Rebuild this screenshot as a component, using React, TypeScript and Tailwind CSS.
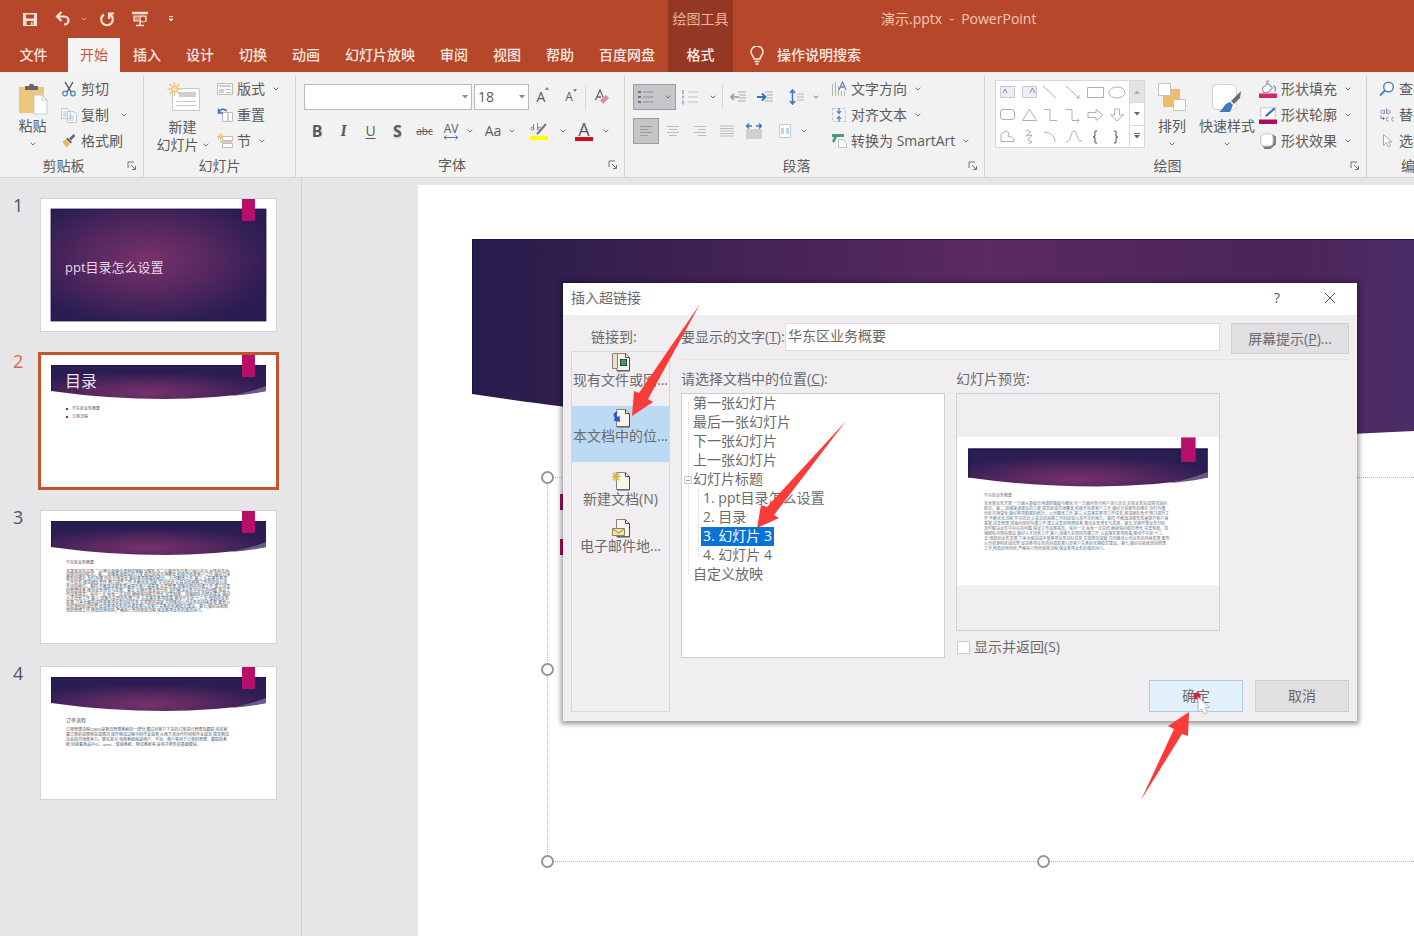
import { useState } from "react";
import type { ReactNode } from "react";
import clsx from "clsx";

const tabs = ["开始", "插入", "设计", "切换", "动画", "幻灯片放映", "审阅", "视图", "帮助", "百度网盘"];

const overview =
  "本季度业务开展,一方面从基础市场调研做起与细化,另一方面对重点客户进行走访,总体业务完成情况良好稳定。第二,加强渠道建设的力度,提高区域市场覆盖,积极开拓新客户工作,做好日常服务的维护,及时沟通,分析市场变化,做好各项数据的统计。公司整体工作,第三,认真落实各项工作任务,推进团队合作,努力提升工作,不断优化流程,学习培训,认真总结前期工作的经验以及不足的地方。第四,不断改进服务质量提升客户满意度,完善管理,加强内部的沟通工作,建立完善的管理体系,推动业务增长与发展。第五,定期开展业务分析,及时解决业务中存在的问题,保证工作效率提高。每月一次,每季一次总结,继续保持稳定增长,完善制度。加强团队内部的建设,做好人才培养工作,第六,加强与总部的沟通工作,认真落实各项政策,推动华东区“十三五”规划的业务发展,力争全面完成年度各项业务目标任务,实现新的突破,共同推动公司业务的持续发展,整合公司资源和区域优势,促进各项业务的协调发展以及客户关系的长期稳定建设。第七,做好应收账款的管理工作,降低经营风险,严格执行合同审批流程,保证各项业务的规范运行。".replaceAll(",", ",");

const orderFlow =
  "订单管理流程(OMS)是物流管理系统的一部分,通过对客户下达的订单进行管理及跟踪,动态掌握订单的进展和完成情况,提升物流过程中的作业效率,从而节省运作时间和作业成本,提高物流企业的市场竞争力。顾名思义,电商系统就是用户、平台、商户等对于订单的管理、跟踪的系统,衔接着商品中心、wms、促销系统、物流系统等,是电子商务的基础模块。".replaceAll(",", ",");

const treeItems = [
  { id: "first", label: "第一张幻灯片" },
  { id: "last", label: "最后一张幻灯片" },
  { id: "next", label: "下一张幻灯片" },
  { id: "prev", label: "上一张幻灯片" },
  { id: "titles", label: "幻灯片标题", expandable: true },
  { id: "s1", label: "1. ppt目录怎么设置", child: true },
  { id: "s2", label: "2. 目录", child: true },
  { id: "s3", label: "3. 幻灯片 3", child: true },
  { id: "s4", label: "4. 幻灯片 4", child: true },
  { id: "custom", label: "自定义放映" },
];

function Icon({ children, className = "size-4", box = "0 0 16 16" }: { children: ReactNode; className?: string; box?: string }) {
  return (
    <svg viewBox={box} className={clsx("shrink-0", className)} fill="none" stroke="currentColor" aria-hidden="true">
      {children}
    </svg>
  );
}

function Caret({ className = "text-gray-500" }: { className?: string }) {
  return (
    <Icon box="0 0 6 4" className={clsx("h-1 w-1.5", className)}>
      <path d="M.7.7 3 3 5.3.7" />
    </Icon>
  );
}

function Separator() {
  return <span className="h-6 w-px shrink-0 bg-[#d6d6d6]" />;
}

function Group({ label, launcher, className, children }: { label: string; launcher?: boolean; className: string; children: ReactNode }) {
  return (
    <section className={clsx("flex shrink-0 flex-col", className)}>
      <div className="flex h-[78px]">{children}</div>
      <div className="flex h-6 items-center">
        <span className="flex-1 text-center">{label}</span>
        {launcher && (
          <button aria-label={label + "设置"} className="w-4">
            <Icon className="size-2.5 text-gray-500" box="0 0 10 10">
              <path d="M1 7V1h6M4 4l4 4M8.500 5v3.500H5" />
            </Icon>
          </button>
        )}
      </div>
    </section>
  );
}

function RowButton({ icon, label, caret }: { icon: ReactNode; label: string; caret?: boolean }) {
  return (
    <button className="flex h-[26px] items-center gap-1 whitespace-nowrap">
      {icon}
      {label}
      {caret && <Caret className="ml-1 text-gray-500" />}
    </button>
  );
}

function Banner({ full }: { full?: boolean }) {
  const id = full ? "bannerFull" : "bannerCurve";
  return (
    <svg viewBox="0 0 235 132" className="absolute inset-0 size-full" aria-hidden="true">
      <defs>
        <radialGradient id={id} cx="0.45" cy={full ? "0.45" : "0.8"} r="0.6">
          <stop offset="0" stopColor="#78316b" />
          <stop offset="0.45" stopColor="#582860" />
          <stop offset="1" stopColor="#2a1d52" />
        </radialGradient>
      </defs>
      {full ? (
        <rect x="10" y="10" width="215" height="112" fill={`url(#${id})`} stroke="#20154f" strokeWidth="0.8" />
      ) : (
        <>
          <path d="M10 10H225V36Q176 44 125 44 66 44 10 36Z" fill={`url(#${id})`} />
          <path d="M10.500 36V10.500H225" fill="none" stroke="#20154f" />
          <path d="M190 41Q210 37 225 31V36Q208 40 190 41Z" fill="#6a5a88" />
        </>
      )}
      <rect x="201" y="0" width="13" height="22" fill="#b80f6b" />
    </svg>
  );
}

function Thumb({ n, selected, children }: { n: number; selected?: boolean; children: ReactNode }) {
  return (
    <li className="flex">
      <span className={clsx("w-7 text-lg leading-3", selected ? "text-[#d9694b]" : "text-gray-600")}>{n}</span>
      <button
        aria-label={`幻灯片 ${n}`}
        className={clsx(
          "relative h-[132px] w-[235px] overflow-hidden bg-white text-left",
          selected ? "ring-3 ring-[#c4552a]" : "ring-1 ring-[#d4d4d6]"
        )}
      >
        {children}
      </button>
    </li>
  );
}

function Ribbon() {
  return (
    <div className="flex h-[106px] shrink-0 divide-x divide-[#d2d2d2] overflow-hidden border-b border-[#d5d5d7] bg-[#f3f2f2] pt-1 text-sm leading-4 text-[#5a5a5a]">
      <Group label="剪贴板" launcher className="w-[144px]">
        <button className="flex w-[61px] flex-col items-center pt-[7px] pl-1">
          <Icon className="h-8 w-[30px]" box="0 0 30 32">
            <path d="M1 4h25v26H1z" fill="#eac67e" stroke="none" />
            <path d="M7 3h4c0-3 5-3 5 0h4v4H7z" fill="#66666b" stroke="none" />
            <path d="M16 12h8l5 5v14H16z" fill="#fff" stroke="#c9c9cc" />
            <path d="M24 12v5h5" stroke="#c9c9cc" />
          </Icon>
          <span className="mt-[3px]">粘贴</span>
          <Caret className="mt-2 text-gray-500" />
        </button>
        <div>
          <RowButton
            label="剪切"
            icon={
              <Icon>
                <path d="M4 1l6 10M12 1 6 11" stroke="#555" strokeWidth="1.400" />
                <circle cx="4" cy="12.500" r="2.300" stroke="#4f86c6" strokeWidth="1.300" />
                <circle cx="12" cy="12.500" r="2.300" stroke="#4f86c6" strokeWidth="1.300" />
              </Icon>
            }
          />
          <div className="flex items-center gap-3">
            <RowButton
              label="复制"
              icon={
                <Icon>
                  <path d="M.5 1.500h6l3 3v7h-9zM6.500 4.500h6l3 3v8h-9z" fill="#fafbfd" stroke="#b9c9de" />
                  <path d="M2 5h4M2 7h4M2 9h4M8 9h5M8 11h5M8 13h5" stroke="#a9c4e6" />
                </Icon>
              }
            />
            <button aria-label="复制选项"><Caret /></button>
          </div>
          <RowButton
            label="格式刷"
            icon={
              <Icon>
                <path d="M13.500 2 9 6.500" stroke="#666" strokeWidth="2.500" />
                <path d="M6.500 4.500 11 9l-1.500 1.500L5 6z" fill="#666" stroke="none" />
                <path d="M4.500 6.500 9 11l-3.500 3.500L1.500 9z" fill="#ebb55c" stroke="none" />
              </Icon>
            }
          />
        </div>
      </Group>

      <Group label="幻灯片" className="w-[152px]">
        <button className="flex w-[73px] flex-col items-center pt-[5px] pl-1">
          <Icon className="h-8 w-9" box="0 0 36 32">
            <path d="M7.500 7.500h27v22h-27z" fill="#fff" stroke="#c8c8ca" />
            <path d="M14 11h17v5H14z" fill="#cfcfd1" stroke="none" />
            <path d="M11 20.500h20M11 24.500h20" stroke="#c8c8ca" />
            <path d="M9.500 1v14M2.500 8h14M4.500 3l10 10M14.500 3l-10 10" stroke="#f0c987" strokeWidth="1.500" />
            <circle cx="9.500" cy="8" r="3" fill="#f8e3b8" stroke="#eec070" />
          </Icon>
          <span className="mt-1.5">新建</span>
          <span className="mt-0.5 flex items-center gap-1">幻灯片<Caret /></span>
        </button>
        <div>
          <RowButton
            label="版式"
            caret
            icon={
              <Icon>
                <path d="M.5 2.500h15v11H.5z" fill="#f7f7f7" stroke="#bdbdbf" />
                <path d="M2 4h12v2H2zM2 8h5v4H2z" fill="#cfcfd2" stroke="none" />
                <path d="M9 8.500h5M9 11.500h5" stroke="#bdbdbf" />
              </Icon>
            }
          />
          <RowButton
            label="重置"
            icon={
              <Icon>
                <path d="M5.500 5.500h10v9h-10z" fill="#fff" stroke="#bdbdbf" />
                <path d="M11 6v8" stroke="#d0d0d4" strokeWidth="2" />
                <path d="M2 5.500C3 2 7 1 10 4M1.500 1.500v4.500H6" stroke="#3f73b5" strokeWidth="1.500" />
              </Icon>
            }
          />
          <RowButton
            label="节"
            caret
            icon={
              <Icon>
                <path d="M5.500 3.500h10v4h-10zM5.500 10.500h10v4h-10z" fill="#fff" stroke="#c2bcbc" />
                <path d="M3 9h12" stroke="#d99a84" />
                <path d="M3.500 0v7M0 3.500h7M1 1l5 5M6 1 1 6" stroke="#efc27a" />
              </Icon>
            }
          />
        </div>
      </Group>

      <Group label="字体" launcher className="w-[329px]">
        <div className="mt-2 flex-1 pl-2">
          <div className="flex h-[26px] items-center">
            <label className="relative mr-0.5 flex w-[168px] items-center">
              <select aria-label="字体" className="h-[26px] w-full appearance-none border border-[#b9b9bb] bg-white px-1">
                <option></option>
              </select>
              <Icon box="0 0 6 4" className="absolute right-1 h-1 w-1.5"><path d="M0 0h6L3 3.500z" fill="#888" stroke="none" /></Icon>
            </label>
            <label className="relative flex w-[55px] items-center">
              <select aria-label="字号" defaultValue="18" className="h-[26px] w-full appearance-none border border-[#b9b9bb] bg-white px-[3px]">
                <option>18</option>
                <option>24</option>
              </select>
              <Icon box="0 0 6 4" className="absolute right-1 h-1 w-1.5"><path d="M0 0h6L3 3.500z" fill="#888" stroke="none" /></Icon>
            </label>
            <button aria-label="增大字号" className="flex w-7 justify-center text-sm">
              A
              <Icon box="0 0 4 4" className="size-1"><path d="M0 3h4L2 0z" fill="#6b87b5" stroke="none" /></Icon>
            </button>
            <button aria-label="减小字号" className="flex w-7 justify-center text-xs">
              A
              <Icon box="0 0 4 4" className="size-1"><path d="M0 0h4L2 3z" fill="#6b87b5" stroke="none" /></Icon>
            </button>
            <Separator />
            <button aria-label="清除格式" className="ml-2">
              <Icon>
                <path d="M1.500 11 6 1l3 7M3 8h4" stroke="#666" strokeWidth="1.300" />
                <path d="m6 11 6-5 3 3-6 6z" fill="#e58a9c" stroke="none" />
              </Icon>
            </button>
          </div>
          <div className="mt-2 flex h-[26px] items-center">
            <button className="w-[26px] text-base font-bold">B</button>
            <button className="w-[27px] font-serif text-base font-bold italic">I</button>
            <button className="w-[27px] underline underline-offset-2">U</button>
            <button className="w-[27px] text-base font-bold text-shadow-sm">S</button>
            <button className="w-[27px] text-[10px] line-through">abc</button>
            <button className="flex w-[40px] items-center justify-center gap-2">
              <span className="flex flex-col items-center">
                <span className="text-xs leading-3">AV</span>
                <Icon box="0 0 16 5" className="h-[5px] w-4 text-[#3f7cc4]"><path d="M1 2.500h14M3.500.5l-2.500 2 2.500 2M12.500.5l2.500 2-2.500 2" /></Icon>
              </span>
              <Caret />
            </button>
            <button className="flex w-[44px] items-center justify-center gap-2">Aa<Caret /></button>
            <span className="ml-1"><Separator /></span>
            <button aria-label="突出显示颜色" className="flex w-[44px] items-center justify-center gap-3">
              <Icon className="h-5 w-[18px]" box="0 0 18 20">
                <path d="M0 15h18v4H0z" fill="#ffff00" stroke="none" />
                <path d="M3.500 3v6M1 7.500a1.500 1.500 0 1 0 3 0 1.500 1.500 0 1 0-3 0M7.500 2v7M8 7.500a1.500 1.500 0 1 0 3 0 1.500 1.500 0 1 0-3 0" stroke="#888" />
                <path d="m16 3-7 8-2 2" stroke="#777" strokeWidth="2" />
              </Icon>
              <Caret />
            </button>
            <button aria-label="字体颜色" className="flex w-[44px] items-center justify-center gap-2.5">
              <span className="w-[18px] border-b-4 border-[#cc0f1a] text-lg leading-4">A</span>
              <Caret />
            </button>
          </div>
        </div>
      </Group>

      <Group label="段落" launcher className="w-[360px]">
        <div className="mt-2 w-[206px] pl-2">
          <div className="flex h-[26px] items-center">
            <button aria-label="项目符号" className="flex h-[26px] w-[43px] items-center justify-between border border-[#9d9d9f] bg-[#c6c6c8] px-1">
              <Icon><path d="M5 3h10M5 8h10M5 13h10" stroke="#8e9094" /><path d="M0 3h3M0 8h3M0 13h3" stroke="#4f78a8" strokeWidth="2" /></Icon>
              <Caret />
            </button>
            <button aria-label="编号" className="flex w-[46px] items-center gap-3 pl-1.5">
              <Icon><path d="M6 3h10M6 8h10M6 13h10" stroke="#c3c3c6" /><path d="M1 1v4M1 6.500v3M1 11.500v4" stroke="#9a9adb" strokeWidth="1.500" /></Icon>
              <Caret />
            </button>
            <Separator />
            <button aria-label="减少缩进" className="flex w-[30px] justify-center">
              <Icon><path d="M8 3h8M9 6h7M9 9h7M8 12h8" stroke="#cfcfd1" strokeWidth="2" /><path d="M9 8H1M4 5 1 8l3 3" stroke="#98989b" strokeWidth="1.600" /></Icon>
            </button>
            <button aria-label="增加缩进" className="flex w-6 justify-center">
              <Icon><path d="M8 3h8M10 6h6M10 9h6M8 12h8" stroke="#cfcfd1" strokeWidth="2" /><path d="M0 8h8M5 4.500 8.500 8 5 11.500" stroke="#2e75c5" strokeWidth="2" /></Icon>
            </button>
            <span className="ml-1"><Separator /></span>
            <button aria-label="行距" className="flex items-center gap-2 pl-2">
              <Icon><path d="M3.500 2v12M1 4l2.500-3L6 4M1 12l2.500 3L6 12" stroke="#3f7cc4" strokeWidth="1.600" /><path d="M8 5h7M8 8h7M8 11h7" stroke="#b5b5b8" /></Icon>
              <Caret />
            </button>
          </div>
          <div className="mt-2 flex h-[26px] items-center">
            <button aria-label="左对齐" className="flex size-[26px] items-center justify-center border border-[#9d9d9f] bg-[#c6c6c8]">
              <Icon><path d="M2 3.500h12M2 6.500h8M2 9.500h12M2 12.500h8" stroke="#9b9b9e" /></Icon>
            </button>
            <button aria-label="居中" className="flex w-[27px] justify-center">
              <Icon><path d="M2 3.500h12M4 6.500h8M2 9.500h12M4 12.500h8" stroke="#bcbcbf" /></Icon>
            </button>
            <button aria-label="右对齐" className="flex w-[27px] justify-center">
              <Icon><path d="M2 3.500h12M6 6.500h8M2 9.500h12M6 12.500h8" stroke="#bcbcbf" /></Icon>
            </button>
            <button aria-label="两端对齐" className="flex w-[27px] justify-center">
              <Icon><path d="M1 3h14M1 5.500h14M1 8h14M1 10.500h14M1 13h14" stroke="#bcbcbf" /></Icon>
            </button>
            <button aria-label="分散对齐" className="flex w-[27px] justify-center">
              <Icon><path d="M0 6h16v10H0z" fill="#cfd0d4" stroke="none" /><path d="M1 3h5M10 3h5M3 .5.500 3 3 5.500M13 .5 15.500 3 13 5.500" stroke="#3f73b5" strokeWidth="1.300" /></Icon>
            </button>
            <span className="ml-1"><Separator /></span>
            <button aria-label="分栏" className="flex items-center gap-2 pl-1.5">
              <Icon><path d="M2.500 1.500h11v13h-11z" fill="#fff" stroke="#b8cbe2" /><path d="M4 6h3M9 6h3M4 8h3M9 8h3M4 10h3M9 10h3" stroke="#7fa5d4" /></Icon>
              <Caret />
            </button>
          </div>
        </div>
        <div>
          <RowButton
            label="文字方向"
            caret
            icon={<Icon><path d="M1.500 3v12M4.500 1v14M7.500 5v10M10.500 10v5M13.500 10v5" stroke="#b2b2b6" /><path d="m8 9 3.500-8L15 9M9 6h5" stroke="#6a85c0" strokeWidth="1.300" /></Icon>}
          />
          <RowButton
            label="对齐文本"
            caret
            icon={<Icon><path d="M1.500 1.500h13v13h-13z" stroke="#b4c5da" strokeDasharray="3 2" /><path d="M8 1v5M8 10v5M6 4l2 2.500L10 4M6 12l2-2.500 2 2.500" stroke="#4f7fb8" strokeWidth="1.200" /></Icon>}
          />
          <RowButton
            label="转换为 SmartArt"
            caret
            icon={<Icon><path d="M1 1h12v3H6L3 10 1 8l2-4H1z" fill="#4e9a78" stroke="none" /><path d="M7.500 6.500h5l3 4v4h-8z" fill="#fff" stroke="#b8c5bf" /></Icon>}
          />
        </div>
      </Group>

      <Group label="绘图" launcher className="w-[382px]">
        <div className="mt-1 ml-2.5 flex h-[68px] w-[150px] border border-[#d9d9db] bg-white text-[#b0b0b4]">
          <Icon className="h-[66px] w-[133px]" box="0 0 133 66">
            <path d="M4.500 5.500h14v11h-14zM26.500 5.500h14v11h-14z" fill="#eceef4" stroke="#c5c9d6" />
            <path d="m7 12 2-4 2 4M34 12l2.500-5 2.500 5" stroke="#7d86c9" />
            <path d="M47 5l13 12M70 5l13 12m0-3v3h-3" />
            <path d="M91.500 6.500h16v10h-16z" />
            <ellipse cx="121" cy="11.500" rx="8" ry="5.500" />
            <rect x="4.500" y="28.500" width="14" height="10" rx="2.500" />
            <path d="M26.500 39.500 33.500 28l7 11.500zM48 28.500h6v11h7M70 28.500h6v11h7m-2-2 2 2-2 2" />
            <path d="M92 31.500h8v-3l7 5.500-7 5.500v-3h-8zM118.500 28v6h-4l6.500 6 6.500-6h-4v-6z" />
            <path d="M5 60.500V53l5-3 3 2-1 4c2-1 6 0 6 4.500zM30 49l5 2-5 4 6-1-4 5 4 2-4 2M48 51c6 0 11 4 11 10M70 61c6 0 4-11 8-11s2 11 8 10" />
            <path d="M101 50c-3 0-2 2-2 4s-1 2-2 2c1 0 2 0 2 2s-1 4 2 4M118 50c3 0 2 2 2 4s1 2 2 2c-1 0-2 0-2 2s1 4-2 4" stroke="#777" strokeWidth="1.300" />
          </Icon>
          <div className="flex w-[15px] flex-col divide-y divide-[#d9d9db] border-l border-[#d9d9db]">
            <button aria-label="上一行" className="flex flex-1 items-center justify-center bg-[#e3e3e4]"><Icon box="0 0 6 4" className="h-1 w-1.5"><path d="M0 4h6L3 .5z" fill="#aaa" stroke="none" /></Icon></button>
            <button aria-label="下一行" className="flex flex-1 items-center justify-center"><Icon box="0 0 6 4" className="h-1 w-1.5"><path d="M0 0h6L3 3.500z" fill="#666" stroke="none" /></Icon></button>
            <button aria-label="其他形状" className="flex flex-1 items-center justify-center"><Icon box="0 0 6 6" className="size-1.5"><path d="M0 2h6L3 5.500zM0 0h6v1H0z" fill="#666" stroke="none" /></Icon></button>
          </div>
        </div>
        <button className="flex w-[54px] flex-col items-center pt-[7px]">
          <Icon className="h-8 w-7" box="0 0 28 32">
            <path d="M5 6h17v18H5z" fill="#ebbd6c" stroke="none" />
            <path d="M.5.500h12v12H.5zM15.500 16.500h12v11h-12z" fill="#fff" stroke="#c3c3c6" />
          </Icon>
          <span className="mt-[3px]">排列</span>
          <Caret className="mt-2 text-gray-500" />
        </button>
        <button className="flex w-14 flex-col items-center whitespace-nowrap pt-[7px]">
          <Icon className="h-8 w-[30px]" box="0 0 30 32">
            <rect x="0.500" y="1.500" width="24" height="25" rx="4" fill="#fff" stroke="#d0d0d3" />
            <path d="m29 8-1 7-6 6-3-3z" fill="#6d6d72" stroke="none" />
            <path d="m18 19 3 3-3 7H7c4-2 5-9 11-10z" fill="#3f78bd" stroke="none" />
          </Icon>
          <span className="mt-[3px]">快速样式</span>
          <Caret className="mt-2 text-gray-500" />
        </button>
        <div className="ml-1">
          <RowButton
            label="形状填充"
            caret
            icon={<Icon className="size-[18px]"><path d="M0 12h16v4H0z" fill="#d8256a" stroke="none" /><path d="m3 7 5-4 4 4-4 4H4zM7 4V1h2" fill="#fff" stroke="#9a9a9e" /><path d="M13 5c2 1 2 4 1 5" stroke="#4f86c6" /></Icon>}
          />
          <RowButton
            label="形状轮廓"
            caret
            icon={<Icon className="size-[18px]"><path d="M0 12h16v4H0z" fill="#a80f5f" stroke="none" /><path d="M1.500 10V1.500h13V10" fill="#fff" stroke="#c4c8d2" /><path d="M14 2 6 9" stroke="#3f73b5" strokeWidth="2" /></Icon>}
          />
          <RowButton
            label="形状效果"
            caret
            icon={<Icon className="size-[18px]"><path d="M3 12.500 5 15h5l5-4V4l-3-2z" fill="#77777b" stroke="none" /><rect x="1.500" y="1.500" width="11" height="11" rx="3.500" fill="#fff" stroke="#c2c2c5" /></Icon>}
          />
        </div>
      </Group>

      <Group label="编辑" className="w-[96px]">
        <div className="pl-3">
          <RowButton label="查找" icon={<Icon><circle cx="9.500" cy="6" r="4.800" fill="#fff" stroke="#4f86c6" strokeWidth="1.500" /><path d="m6 9.500-5 5" stroke="#4f86c6" strokeWidth="2" /></Icon>} />
          <RowButton
            label="替换"
            icon={
              <Icon>
                <circle cx="3.500" cy="5" r="1.800" stroke="#9b93bd" />
                <circle cx="9.500" cy="5" r="1.800" stroke="#9b93bd" />
                <path d="M5.500 2.500V7M7.500 1v6M9.500 10.500a1.800 1.800 0 1 0 0 3.500M15 10.500a1.800 1.800 0 1 0 0 3.500" stroke="#9b93bd" />
                <path d="M2 8.500v3h3.500M4 10l1.500 1.500L4 13" stroke="#4f86c6" />
              </Icon>
            }
          />
          <RowButton label="选择" icon={<Icon><path d="M4.500 1.500v11l3-3 2 4.500 2-1-2-4h3.500z" fill="#fff" stroke="#aaaaad" /></Icon>} />
        </div>
      </Group>
    </div>
  );
}

function PageIcon({ kind }: { kind: string }) {
  return (
    <Icon className="size-5" box="0 0 20 20">
      <path d="M5.500 1.500h9l4 4v13h-13z" fill="#f7f5ea" stroke="#85857f" />
      <path d="M14.500 1.500v4h4M18.500 6v13H6" stroke="#4a4a46" />
      {kind === "file" && (
        <>
          <path d="M1.500 1.500h5v15h-5z" fill="#e6e2c5" stroke="#85857f" />
          <path d="M9 7h7v7H9z" fill="#26384a" stroke="none" />
          <circle cx="12.500" cy="10.500" r="3" fill="#3f9a62" stroke="none" />
        </>
      )}
      {kind === "place" && <path d="M5 4C2 5 2 8 4 10L2.500 12.500 9 14l-.5-6.500L6.500 9C5 8 5 6 7 4z" fill="#2b55c8" stroke="none" />}
      {kind === "new" && <path d="M5 1v9M1 5.500h9M2 2l6 7M8 2 2 9" stroke="#cdb94c" strokeWidth="1.300" />}
      {kind === "mail" && (
        <>
          <path d="M1.500 10.500h12v7h-12z" fill="#efe6a8" stroke="#8c8458" />
          <path d="m2 11 5.500 4 5.500-4" stroke="#8c8458" />
        </>
      )}
    </Icon>
  );
}

function HyperlinkDialog() {
  const [text, setText] = useState("华东区业务概要");
  const [selected, setSelected] = useState("s3");

  return (
    <div
      role="dialog"
      aria-label="插入超链接"
      className="absolute top-[105px] left-[563px] flex h-[438px] w-[794px] flex-col bg-[#f0eef0] text-sm leading-4 text-[#6a6a6d] shadow-[0_1px_5px_2px_rgba(0,0,0,0.4)]"
    >
      <div className="flex h-8 shrink-0 items-center bg-white pr-[21px] pb-0.5 pl-2">
        <h2 className="flex-1">插入超链接</h2>
        <button aria-label="帮助" className="mr-11 text-[#555]">?</button>
        <button aria-label="关闭" className="text-[#555]">
          <Icon className="size-3" box="0 0 12 12"><path d="m1 1 10 10M11 1 1 11" /></Icon>
        </button>
      </div>
      <div className="flex flex-1 gap-[11px] px-2 pt-2 pb-[9px]">
        <div className="flex w-[99px] flex-col">
          <span className="h-7 pl-5 leading-7">链接到:</span>
          <div className="flex-1 border border-[#d9d7d9]">
            <button className="flex h-[54px] w-full flex-col items-center whitespace-nowrap">
              <PageIcon kind="file" />现有文件或网...
            </button>
            <button className="flex h-14 w-full flex-col items-center whitespace-nowrap bg-[#bddaf4] pt-0.5">
              <PageIcon kind="place" />本文档中的位...
            </button>
            <button className="mt-2 flex h-[47px] w-full flex-col items-center whitespace-nowrap pt-px">
              <PageIcon kind="new" />新建文档(N)
            </button>
            <button className="flex h-[47px] w-full flex-col items-center whitespace-nowrap pt-px">
              <PageIcon kind="mail" />电子邮件地...
            </button>
          </div>
        </div>

        <div className="flex flex-1 flex-col">
          <div className="flex h-[31px]">
            <label htmlFor="display" className="w-[104px] whitespace-nowrap leading-7">
              要显示的文字(<u>T</u>):
            </label>
            <input
              id="display"
              value={text}
              onChange={(e) => setText(e.target.value)}
              className="h-7 min-w-0 flex-1 border border-[#dedcde] bg-white px-0.5 pb-1"
            />
            <button className="ml-[11px] w-[118px] border border-[#cfcdd0] bg-[#e1dfe2]">
              屏幕提示(<u>P</u>)...
            </button>
          </div>
          <div className="mt-[5px] h-px bg-[#e6e4e6]" />
          <div className="mt-[7px] flex gap-[11px]">
            <div className="w-[264px]">
              <p className="h-[26px] leading-6">请选择文档中的位置(<u>C</u>):</p>
              <ul role="tree" className="relative h-[265px] border border-[#cfcdcf] bg-white">
                <li aria-hidden="true" className="absolute top-2 left-1.5 h-[172px] border-l border-dotted border-[#d6d6d8]" />
                <li aria-hidden="true" className="absolute top-[96px] left-4 h-[66px] border-l border-dotted border-[#d6d6d8]" />
                {treeItems.map((item) => (
                  <li key={item.id} role="treeitem" aria-selected={item.id === selected} className={clsx("relative h-[19px]", item.child ? "pl-[19px]" : "pl-[11px]")}>
                    {item.expandable && (
                      <span className="absolute top-1.5 left-0.5 flex size-2 items-center justify-center border border-[#cdcdd0] bg-white">
                        <span className="h-px w-1 bg-gray-400" />
                      </span>
                    )}
                    <button
                      onClick={() => setSelected(item.id)}
                      className={clsx(
                        "h-[19px] whitespace-nowrap pb-0.5",
                        item.child && "px-0.5",
                        item.id === selected && "bg-[#0a74d6] text-white"
                      )}
                    >
                      {item.label}
                    </button>
                  </li>
                ))}
              </ul>
            </div>
            <div className="w-[264px]">
              <p className="h-[26px] leading-6">幻灯片预览:</p>
              <div className="h-[238px] border border-[#d3d1d4] pt-[43px]">
                <div className="relative h-[148px] overflow-hidden bg-white">
                  <Banner />
                  <div className="relative w-[213px] pt-14 pl-[27px] text-[4px] leading-[5px] text-gray-500">
                    <p>华东区业务概要</p>
                    <p className="mt-[3px] h-[60px] overflow-hidden break-all">{overview}</p>
                  </div>
                </div>
              </div>
              <label className="mt-2 flex items-center gap-1">
                <input type="checkbox" className="ml-px size-[13px] appearance-none border border-[#cfcdcf] bg-white" />
                显示并返回(S)
              </label>
            </div>
          </div>
          <div className="mt-auto flex justify-end gap-3">
            <button className="h-8 w-[94px] border border-[#a9cfec] bg-[#e4f0fa]">确定</button>
            <button className="h-8 w-[94px] border border-[#cfcdd0] bg-[#e1dfe2]">取消</button>
          </div>
        </div>
      </div>
    </div>
  );
}

export default function App() {
  return (
    <div className="relative flex h-screen flex-col overflow-hidden bg-[#e6e6e8] font-['Open_Sans','Noto_Sans_CJK_SC',sans-serif]">
      <header className="flex h-[72px] shrink-0 bg-[#b7472a] text-sm text-[#fbe9e2]">
        <div className="w-[668px] shrink-0">
          <div className="flex h-[38px] items-center pl-[22px] text-[#fde3d6]">
            <button aria-label="保存">
              <Icon><path d="M1 2h14v13H1z" fill="#fde3d6" stroke="none" /><path d="M4 3.500h8v4H4zM4.500 10h7v4h-7z" fill="#b7472a" stroke="none" /><path d="M9 11h1.500v3H9z" fill="#fde3d6" stroke="none" /></Icon>
            </button>
            <button aria-label="撤消" className="ml-[17px]">
              <Icon><path d="M6.500 1 2 5.500 6.500 10M2.500 5.500H9c6 0 6 8 0 8" strokeWidth="2.200" /></Icon>
            </button>
            <Caret className="ml-2.5 opacity-60" />
            <button aria-label="恢复" className="ml-3">
              <Icon><path d="M5 3.500a5.800 5.800 0 1 0 6 0M10 8V2.500h5" strokeWidth="2.200" /></Icon>
            </button>
            <button aria-label="从头开始" className="ml-4">
              <Icon className="h-4 w-[18px]" box="0 0 18 16">
                <path d="M1 2h16" strokeWidth="2.500" />
                <path d="M3 5h12v5H3z" fill="#d58a70" strokeWidth="1.200" />
                <circle cx="12" cy="8" r="3" fill="#b7472a" />
                <path d="M9 10v4M5 14.500h8" strokeWidth="1.500" />
              </Icon>
            </button>
            <button aria-label="自定义快速访问工具栏" className="ml-[19px]">
              <Icon className="size-1.5" box="0 0 6 6"><path d="M1 .5h4M1 3h4L3 5z" fill="currentColor" /></Icon>
            </button>
          </div>
          <nav className="flex h-[34px] gap-px whitespace-nowrap">
            <button className="w-[67px] font-medium">文件</button>
            {tabs.map((tab) => (
              <button key={tab} className={clsx("px-3", tab === "开始" ? "bg-[#f5f3f3] text-[#c4583c]" : "font-medium")}>
                {tab}
              </button>
            ))}
          </nav>
        </div>
        <div className="flex w-[65px] shrink-0 flex-col items-center bg-[#943823]">
          <span className="flex h-[38px] items-center whitespace-nowrap text-[#eab29c]">绘图工具</span>
          <button className="h-[34px] font-medium">格式</button>
        </div>
        <div className="min-w-0 flex-1 whitespace-nowrap">
          <div className="flex h-[38px] items-center pl-[148px] text-[#f6c9b6]">
            <h1 className="whitespace-pre">演示.pptx  -  PowerPoint</h1>
          </div>
          <button className="flex h-[34px] items-center gap-3 pl-4 font-medium">
            <Icon className="h-[19px] w-4" box="0 0 16 19">
              <path d="M5 13c0-3-3-4-3-7a6 6 0 0 1 12 0c0 3-3 4-3 7zM5.500 15.500h5M6.500 18h3" strokeWidth="1.500" />
            </Icon>
            操作说明搜索
          </button>
        </div>
      </header>

      <Ribbon />

      <main className="relative flex min-h-0 flex-1">
        <ol className="flex w-[302px] shrink-0 flex-col gap-6 border-r border-[#d0d0d3] pt-[21px] pl-[13px]">
          <Thumb n={1}>
            <Banner full />
            <span className="absolute top-[58px] left-6 text-[13px] leading-5 text-[#e6d8e8]">ppt目录怎么设置</span>
          </Thumb>
          <Thumb n={2} selected>
            <Banner />
            <span className="absolute top-4 left-6 text-base leading-5 text-[#eee2f0]">目录</span>
            <span className="absolute top-[51px] left-[25px] flex flex-col gap-0.5 text-[4px] leading-[6px] text-gray-600">
              {["华东区业务概要", "订单流程"].map((line) => (
                <span key={line} className="flex items-center gap-1"><i className="size-0.5 bg-[#a0105c]" />{line}</span>
              ))}
            </span>
          </Thumb>
          <Thumb n={3}>
            <Banner />
            <span className="relative flex h-full w-[190px] flex-col pt-[50px] pl-[25px] text-[4px] leading-[4px] text-gray-600">
              <span className="mb-1">华东区业务概要</span>
              <span className="max-h-[52px] overflow-hidden break-all">{overview}</span>
            </span>
          </Thumb>
          <Thumb n={4}>
            <Banner />
            <span className="relative flex h-full w-[190px] flex-col pt-[51px] pl-[25px] text-[4px] leading-[5px] text-gray-600">
              <span className="mb-1 text-[5px]">订单流程</span>
              <span className="break-all">{orderFlow}</span>
            </span>
          </Thumb>
        </ol>

        <div className="relative mt-[7px] ml-[116px] min-w-0 flex-1 overflow-hidden bg-white">
          <svg viewBox="0 0 1140 200" className="absolute top-[54px] left-[54px] h-[200px] w-[1140px]" aria-hidden="true">
            <defs>
              <linearGradient id="slideBanner">
                <stop offset="0" stopColor="#261c4c" />
                <stop offset="0.200" stopColor="#3f2152" />
                <stop offset="0.450" stopColor="#5a2a60" />
                <stop offset="0.720" stopColor="#4a2557" />
                <stop offset="0.820" stopColor="#4c2c68" />
                <stop offset="1" stopColor="#241b4e" />
              </linearGradient>
            </defs>
            <path d="M0 0H1140V165L942 192C500 215 200 185 0 155Z" fill="url(#slideBanner)" />
            <path d="M.5 155V.5H1140" fill="none" stroke="#1a1144" />
          </svg>
          {/* text placeholder with its resize handles */}
          <div className="absolute top-[292px] left-[129px] h-[385px] w-[991px] border border-dotted border-[#b4b4b7]">
            {[
              "-top-[7px] -left-[7px]",
              "top-[185px] -left-[7px]",
              "-bottom-[7px] -left-[7px]",
              "-bottom-[7px] left-[489px]",
            ].map((pos) => (
              <span key={pos} className={clsx("absolute size-[13px] rounded-full border-2 border-[#959597] bg-white", pos)} />
            ))}
            <span className="absolute top-4 left-3 h-4 w-3 bg-[#a0105c]" />
            <span className="absolute top-[61px] left-3 h-4 w-3 bg-[#a0105c]" />
          </div>
        </div>

        <HyperlinkDialog />
      </main>

      {/* red callout arrows and the mouse pointer */}
      <svg viewBox="0 0 1414 936" className="pointer-events-none absolute top-0 left-0 h-[936px] w-[1414px]" aria-hidden="true">
        <g fill="#fb3a3a">
          <path d="M632 416 634 391 639 393 700 304 648 399 653 402Z" />
          <path d="M757 528 761 505 767 507 846 421 774 515 779 518Z" />
          <path d="M1189 712 1168 726 1174 729 1141 800 1182 734 1188 736Z" />
        </g>
        <circle cx="1197" cy="696" r="3.500" fill="#e0203a" />
        <path d="M1198 697v15l3.500-3 3 5 3-1.500-2.500-5h4.500z" fill="#fff" stroke="#b9b9bd" />
      </svg>
    </div>
  );
}
